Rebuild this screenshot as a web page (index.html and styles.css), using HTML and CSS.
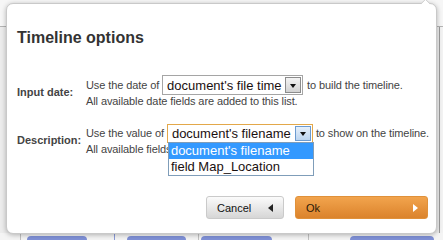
FILE: index.html
```html
<!DOCTYPE html>
<html>
<head>
<meta charset="utf-8">
<link rel="stylesheet" href="styles.css">
</head>
<body>
<div class="backdrop">
  <div class="bd-top"></div>
  <div class="bd-mid"></div>
  <div class="bd-strip">
    <span class="vl vl1"></span>
    <span class="bar bar1"></span>
    <span class="vl vl2 blue"></span>
    <span class="bar bar2"></span>
    <span class="vl vl3"></span>
    <span class="bar bar3"></span>
    <span class="vl vl4"></span>
    <span class="bar bar4"></span>
  </div>
</div>

<div class="dialog">
  <span class="notch"></span>
  <h1 class="title">Timeline options</h1>
  <div class="form">
    <div class="label">Input date:</div>
    <div class="field">
      <div class="line">
        <span>Use the date of</span>
        <span class="select">
          <span class="select-text">document's file time</span>
          <span class="select-btn"><span class="caret"></span></span>
        </span>
        <span>to build the timeline.</span>
      </div>
      <div class="hint">All available date fields are added to this list.</div>
    </div>

    <div class="label">Description:</div>
    <div class="field">
      <div class="line">
        <span>Use the value of</span>
        <span class="select select-open">
          <span class="select-text">document's filename</span>
          <span class="select-btn"><span class="caret"></span></span>
          <span class="options">
            <span class="option selected">document's filename</span>
            <span class="option">field Map_Location</span>
          </span>
        </span>
        <span>to show on the timeline.</span>
      </div>
      <div class="hint">All available fields are added to this list.</div>
    </div>
  </div>
  <div class="buttons">
    <button class="btn btn-cancel"><span>Cancel</span><span class="tri-left"></span></button>
    <button class="btn btn-ok"><span>Ok</span><span class="tri-right"></span></button>
  </div>
</div>
</body>
</html>
```

FILE: styles.css
```css
html, body {
  margin: 0;
  padding: 0;
}
body {
  width: 443px;
  height: 240px;
  overflow: hidden;
  position: relative;
  background: #f2f2f2;
  font-family: "Liberation Sans", Arial, sans-serif;
}

/* background page */
.backdrop {
  display: flex;
  flex-direction: column;
  height: 240px;
}
.bd-top {
  height: 26px;
  border-bottom: 1px solid #b4b4b4;
  background: #f6f6f6;
}
.bd-mid {
  flex: 1;
  border-right: 1px solid #9a9a9a;
  margin-right: 3px;
  background: #ececec;
}
.bd-strip {
  height: 7px;
  display: flex;
  align-items: flex-end;
  background: #f4f4f4;
}
.vl {
  width: 1px;
  height: 7px;
  background: #c0c0c0;
}
.vl.blue { background: #8a9ad8; }
.bar {
  height: 4px;
  background: #7f90d6;
  border-radius: 4px 4px 0 0;
}
.vl1 { margin-left: 20px; }
.bar1 { margin-left: 6px; width: 60px; }
.vl2 { margin-left: 27px; }
.bar2 { margin-left: 12px; width: 59px; }
.vl3 { margin-left: 12px; }
.bar3 { margin-left: 2px; width: 71px; }
.vl4 { margin-left: 36px; }
.bar4 { margin-left: 41px; width: 84px; }

/* dialog */
.dialog {
  position: absolute;
  left: 6px;
  top: 3px;
  width: 431px;
  height: 231px;
  box-sizing: border-box;
  background: #fff;
  border: 1px solid #c9c9c9;
  border-radius: 7px;
  box-shadow: 0 1px 5px rgba(0, 0, 0, 0.28);
  padding: 25px 8px 14px 10px;
  color: #444;
}
.notch {
  position: absolute;
  top: -4px;
  left: 415px;
  width: 6px;
  height: 6px;
  background: #fff;
  border-top: 1px solid #c9c9c9;
  border-left: 1px solid #c9c9c9;
  border-radius: 1px 0 0 0;
  transform: rotate(45deg);
}
.title {
  margin: 0 0 28px 0;
  font-size: 16px;
  line-height: 18px;
  font-weight: bold;
  color: #333;
}

.form {
  display: grid;
  grid-template-columns: 69px 1fr;
  row-gap: 15px;
  font-size: 11px;
}
.label {
  align-self: center;
  font-weight: bold;
  line-height: 13px;
  color: #444;
  padding-top: 1px;
  white-space: nowrap;
}
.field {
  display: flex;
  flex-direction: column;
  min-width: 0;
  letter-spacing: -0.1px;
}
.line {
  display: flex;
  align-items: center;
  height: 20px;
  gap: 3px;
  line-height: 13px;
  white-space: nowrap;
}
.line > * {
  flex-shrink: 0;
}
.hint {
  line-height: 13px;
  white-space: nowrap;
}

.select {
  position: relative;
  display: flex;
  align-items: center;
  justify-content: space-between;
  box-sizing: border-box;
  width: 141px;
  height: 20px;
  border: 1px solid #a5a5a5;
  background: #fff;
  margin-right: 1px;
  letter-spacing: 0;
}
.select-open {
  width: 146px;
  height: 19px;
  border-color: #e3a84a;
  margin-right: 0;
}
.select-text {
  padding-left: 4px;
  font-size: 13px;
  color: #1a1010;
  white-space: nowrap;
}
.select-btn {
  box-sizing: border-box;
  width: 16px;
  height: 16px;
  margin-right: 1px;
  border: 1px solid #8c8c8c;
  background: linear-gradient(#f4f4f4, #d2d2d2);
  display: flex;
  align-items: center;
  justify-content: center;
}
.select-open .select-btn {
  height: 15px;
  border-color: #6c9bd0;
  background: linear-gradient(#e6f0fb, #bcd5ef);
}
.caret {
  width: 0;
  height: 0;
  border-left: 3.5px solid transparent;
  border-right: 3.5px solid transparent;
  border-top: 4px solid #111;
  margin-top: 1px;
}
.options {
  position: absolute;
  top: 100%;
  left: 0;
  width: 146px;
  box-sizing: border-box;
  border: 1px solid #7f9db9;
  background: #fff;
  display: flex;
  flex-direction: column;
  z-index: 2;
}
.option {
  height: 16px;
  line-height: 16px;
  padding-left: 2px;
  font-size: 13px;
  color: #1a1010;
  white-space: nowrap;
}
.option.selected {
  background: #3399ff;
  color: #fff;
}

.buttons {
  display: flex;
  justify-content: flex-end;
  gap: 11px;
  margin-top: 40px;
}
.btn {
  box-sizing: border-box;
  height: 23px;
  display: flex;
  align-items: center;
  justify-content: space-between;
  font-family: "Liberation Sans", Arial, sans-serif;
  font-size: 11px;
  border-radius: 3px;
  margin: 0;
  cursor: pointer;
}
.btn-cancel {
  width: 78px;
  padding: 0 10px 0 10px;
  border: 1px solid #cacaca;
  background: linear-gradient(#fbfbfb, #d6d6d6);
  color: #111;
}
.btn-ok {
  width: 133px;
  padding: 0 9px 0 10px;
  border: 1px solid #e0913a;
  background: linear-gradient(#f2a44d, #db832c);
  color: #2a1a08;
}
.tri-left {
  width: 0;
  height: 0;
  border-top: 4.5px solid transparent;
  border-bottom: 4.5px solid transparent;
  border-right: 5px solid #222;
}
.tri-right {
  width: 0;
  height: 0;
  border-top: 4.5px solid transparent;
  border-bottom: 4.5px solid transparent;
  border-left: 5px solid #fff;
}
```
